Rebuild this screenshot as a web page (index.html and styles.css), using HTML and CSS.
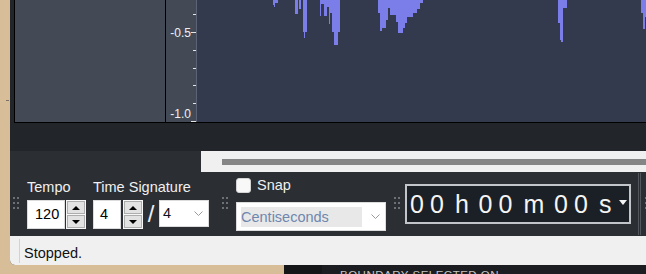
FILE: index.html
```html
<!DOCTYPE html>
<html lang="en">
<head>
    <meta charset="UTF-8">
    <meta name="viewport" content="width=device-width, initial-scale=1.0">
    <title>Audacity - Time Toolbars</title>
    <link rel="stylesheet" href="styles.css">
</head>
<body>
    <div class="screen">
        <div class="desktop-edge"><div class="edge-tick"></div></div>

        <div class="window">
            <!-- track area (bottom half of the waveform) -->
            <div class="tracks">
                <div class="track">
                    <div class="track-controls"></div>
                    <div class="ruler">
                        <svg class="ruler-ticks" width="30" height="122" viewBox="0 0 30 122">
                            <rect x="27" y="14" width="3" height="1"/>
                            <rect x="25" y="32" width="5" height="1"/>
                            <rect x="27" y="50" width="3" height="1"/>
                            <rect x="27" y="68" width="3" height="1"/>
                            <rect x="27" y="85" width="3" height="1"/>
                            <rect x="27" y="103" width="3" height="1"/>
                            <rect x="25" y="121" width="5" height="1"/>
                        </svg>
                        <span class="ruler-label label-mid">-0.5</span>
                        <span class="ruler-label label-low">-1.0</span>
                    </div>
                    <div class="wave">
                        <svg width="449" height="122" viewBox="0 0 449 122" shape-rendering="crispEdges">
                            <path class="wave-fill" d="M0,0 L76,0 L76,5 L77,5 L77,7 L78,7 L78,3 L81,3 L81,0
                                L98,0 L98,14 L101,14 L101,0 L102,0 L102,9 L104,9 L104,0 L106,0 L106,32 L107,32 L107,38 L108,38 L108,32 L110,32 L110,0
                                L123,0 L123,16 L124,16 L124,4 L127,4 L127,16 L130,16 L130,7 L132,7 L132,24 L133,24 L133,13 L135,13 L135,32 L137,32 L137,45 L141,45 L141,32 L143,32 L143,0
                                L181,0 L181,13 L183,13 L183,31 L185,31 L185,28 L189,28 L189,20 L191,20 L191,8 L193,8 L193,15 L199,15 L199,22 L201,22 L201,33 L206,33 L206,28 L208,28 L208,23 L210,23 L210,17 L216,17 L216,13 L220,13 L220,9 L223,9 L223,3 L226,3 L226,0
                                L361,0 L361,23 L363,23 L363,40 L364,40 L364,42 L366,42 L366,8 L370,8 L370,0
                                L444,0 L444,13 L446,13 L446,29 L448,29 L448,17 L449,17 L449,0 Z"/>
                        </svg>
                    </div>
                </div>
            </div>

            <div class="h-scroll-row">
                <div class="h-scroll"><div class="h-thumb"></div></div>
            </div>

            <!-- toolbars -->
            <div class="toolbars">
                <svg class="grip grip-first" width="7" height="12" viewBox="0 0 7 12">
                    <rect x="0" y="0" width="2" height="2"/><rect x="4" y="0" width="2" height="2"/>
                    <rect x="0" y="5" width="2" height="2"/><rect x="4" y="5" width="2" height="2"/>
                    <rect x="0" y="10" width="2" height="2"/><rect x="4" y="10" width="2" height="2"/>
                </svg>

                <div class="tool-group tempo-group">
                    <div class="tool-label">Tempo</div>
                    <div class="input-row">
                        <div class="num-box tempo-box">120</div>
                        <div class="spinner">
                            <div class="spin-btn spin-up"></div>
                            <div class="spin-btn spin-down"></div>
                        </div>
                    </div>
                </div>

                <div class="tool-group sig-group">
                    <div class="tool-label">Time Signature</div>
                    <div class="input-row">
                        <div class="num-box sig-box">4</div>
                        <div class="spinner spinner-sig">
                            <div class="spin-btn spin-up"></div>
                            <div class="spin-btn spin-down"></div>
                        </div>
                        <div class="sig-slash">/</div>
                        <div class="sig-select">
                            <span class="sig-value">4</span>
                            <svg class="chevron" width="9" height="5" viewBox="0 0 9 5">
                                <polyline points="0.5,0.5 4.5,4.5 8.5,0.5"/>
                            </svg>
                        </div>
                    </div>
                </div>

                <svg class="grip grip-snap" width="7" height="12" viewBox="0 0 7 12">
                    <rect x="0" y="0" width="2" height="2"/><rect x="4" y="0" width="2" height="2"/>
                    <rect x="0" y="5" width="2" height="2"/><rect x="4" y="5" width="2" height="2"/>
                    <rect x="0" y="10" width="2" height="2"/><rect x="4" y="10" width="2" height="2"/>
                </svg>

                <div class="tool-group snap-group">
                    <div class="snap-row">
                        <span class="checkbox"></span>
                        <span class="snap-label">Snap</span>
                    </div>
                    <div class="snap-select">
                        <span class="snap-value">Centiseconds</span>
                        <svg class="chevron snap-chevron" width="9" height="5" viewBox="0 0 9 5">
                            <polyline points="0.5,0.5 4.5,4.5 8.5,0.5"/>
                        </svg>
                    </div>
                </div>

                <svg class="grip grip-time" width="7" height="12" viewBox="0 0 7 12">
                    <rect x="0" y="0" width="2" height="2"/><rect x="4" y="0" width="2" height="2"/>
                    <rect x="0" y="5" width="2" height="2"/><rect x="4" y="5" width="2" height="2"/>
                    <rect x="0" y="10" width="2" height="2"/><rect x="4" y="10" width="2" height="2"/>
                </svg>

                <div class="time-display">
                    <span class="tt tt-a">0</span><span class="tt tt-b">0</span><span class="tt tt-h">h</span><span class="tt tt-a">0</span><span class="tt tt-b">0</span><span class="tt tt-m">m</span><span class="tt tt-a">0</span><span class="tt tt-b">0</span><span class="tt tt-s">s</span><span class="tt-menu"></span>
                </div>

                <div class="tool-sep"></div>

                <svg class="grip grip-last" width="7" height="12" viewBox="0 0 7 12">
                    <rect x="0" y="0" width="2" height="2"/><rect x="4" y="0" width="2" height="2"/>
                    <rect x="0" y="5" width="2" height="2"/><rect x="4" y="5" width="2" height="2"/>
                    <rect x="0" y="10" width="2" height="2"/><rect x="4" y="10" width="2" height="2"/>
                </svg>
            </div>

            <div class="status-bar">
                <div class="status-divider"></div>
                <div class="status-text">Stopped.</div>
            </div>
        </div>
    </div>

    <!-- window behind -->
    <div class="behind">
        <div class="behind-gap"></div>
        <div class="behind-dark"></div>
        <div class="behind-panel">BOUNDARY SELECTED ON</div>
    </div>
</body>
</html>
```

FILE: styles.css
```css
* {
    box-sizing: border-box;
}

body {
    margin: 0;
    width: 646px;
    height: 274px;
    overflow: hidden;
    background-color: #d7bd98;
    font-family: "Liberation Sans", Arial, sans-serif;
    font-size: 14.5px;
}

.screen {
    display: flex;
    height: 265px;
}

.desktop-edge {
    width: 10px;
    flex: none;
}

.edge-tick {
    width: 3px;
    height: 1px;
    margin: 100px 0 0 6px;
    background-color: #7b7266;
}

.window {
    width: 636px;
    flex: none;
    display: flex;
    flex-direction: column;
    background-color: #222529;
    border-bottom-left-radius: 5px;
    overflow: hidden;
}

/* tracks */
.tracks {
    height: 123px;
    padding-left: 4px;
    flex: none;
}

.track {
    display: flex;
    height: 123px;
    border-left: 1px solid #000;
    border-bottom: 1px solid #000;
}

.track-controls {
    width: 151px;
    flex: none;
    background-color: #434a56;
    border-right: 1px solid #000;
}

.ruler {
    position: relative;
    width: 31px;
    flex: none;
    background-color: #434a56;
    border-right: 1px solid #5c6374;
}

.ruler-ticks {
    display: block;
    fill: #e4e4e4;
}

.ruler-label {
    position: absolute;
    right: 5px;
    font-size: 12px;
    line-height: 12px;
    color: #eef0f4;
}

.label-mid {
    top: 27px;
}

.label-low {
    top: 108px;
}

.wave {
    flex: 1;
    background-color: #343a4e;
}

.wave svg {
    display: block;
}

.wave-fill {
    fill: #7b7ee8;
}

/* horizontal scrollbar */
.h-scroll-row {
    height: 49px;
    flex: none;
    padding-top: 28px;
    background: linear-gradient(#222529 0, #222529 28px, #2b2e33 28px);
}

.h-scroll {
    height: 21px;
    margin-left: 191px;
    padding-top: 8px;
    background-color: #f0f0f0;
}

.h-thumb {
    height: 6px;
    margin-left: 21px;
    background-color: #858585;
}

/* toolbars */
.toolbars {
    display: flex;
    align-items: flex-start;
    height: 64px;
    flex: none;
    background-color: #2b2e33;
    color: #f0f0f0;
}

.grip {
    flex: none;
    margin-top: 25px;
    fill: #6c7177;
}

.grip-first {
    margin-left: 3px;
}

.grip-snap {
    margin-left: 13px;
}

.grip-time {
    margin-left: 8px;
}

.grip-last {
    margin-left: 4px;
}

.tool-group {
    flex: none;
}

.tempo-group,
.sig-group {
    margin-left: 7px;
    padding-top: 7px;
}

.tool-label {
    line-height: 17px;
    margin-bottom: 4px;
    white-space: nowrap;
}

.input-row {
    display: flex;
    align-items: flex-start;
}

.num-box {
    height: 29px;
    background-color: #fff;
    border: 1px solid #dcdcdc;
    color: #000;
    line-height: 27px;
}

.tempo-box {
    width: 38px;
    padding-left: 7px;
}

.sig-box {
    width: 28px;
    padding-left: 6px;
}

.spinner {
    display: flex;
    flex-direction: column;
    gap: 1px;
    width: 20px;
    height: 29px;
    margin-left: 1px;
    padding: 1px;
    background-color: #f7f7f7;
}

.spinner-sig {
    margin-left: 2px;
}

.spin-btn {
    flex: 1;
    display: flex;
    align-items: center;
    justify-content: center;
    background-color: #e2e2e2;
    border: 1px solid #adadad;
}

.spin-btn::after {
    content: "";
    width: 0;
    height: 0;
    border-left: 4px solid transparent;
    border-right: 4px solid transparent;
}

.spin-up::after {
    border-bottom: 4px solid #000;
}

.spin-down::after {
    border-top: 4px solid #000;
}

.sig-slash {
    width: 16px;
    text-align: center;
    font-size: 24px;
    line-height: 27px;
    color: #eceef2;
}

.sig-select {
    display: flex;
    align-items: center;
    width: 50px;
    height: 27px;
    padding-left: 3px;
    background-color: #fff;
    border: 1px solid #dcdcdc;
    color: #101020;
}

.sig-value {
    width: 31px;
    line-height: 25px;
}

.chevron {
    display: block;
    fill: none;
    stroke: #9a9a9a;
    stroke-width: 1;
}

.snap-group {
    margin-left: 7px;
    padding-top: 6px;
}

.snap-row {
    display: flex;
    align-items: center;
    height: 15px;
}

.checkbox {
    width: 15px;
    height: 15px;
    background-color: #f8f8f8;
    border: 1px solid #d4d4d4;
    border-radius: 3px;
}

.snap-label {
    margin-left: 6px;
    line-height: 15px;
}

.snap-select {
    display: flex;
    align-items: center;
    width: 150px;
    height: 29px;
    margin-top: 9px;
    padding: 4px;
    background-color: #fff;
    border: 1px solid #dcdcdc;
}

.snap-value {
    width: 121px;
    height: 20px;
    line-height: 20px;
    background-color: #e8e8e8;
    color: #6f86ae;
    white-space: nowrap;
}

.snap-chevron {
    margin-left: 9px;
}

.time-display {
    display: flex;
    align-items: center;
    width: 226px;
    height: 40px;
    margin-top: 12px;
    margin-left: 4px;
    padding-left: 3px;
    background-color: #1b1f26;
    border: 2px solid #c2c5c9;
    color: #f4f4f4;
    font-size: 25px;
    flex: none;
}

.tt {
    display: inline-block;
}

.tt-a {
    width: 20px;
}

.tt-b {
    width: 25px;
}

.tt-h {
    width: 23.5px;
}

.tt-m {
    width: 30.5px;
}

.tt-s {
    width: 20px;
}

.tt-menu {
    width: 0;
    height: 0;
    margin-top: -3px;
    border-left: 4.5px solid transparent;
    border-right: 4.5px solid transparent;
    border-top: 5px solid #f4f4f4;
}

.tool-sep {
    width: 3px;
    height: 62px;
    margin-top: 1px;
    margin-left: 7px;
    flex: none;
    border-left: 1px solid #53575d;
    border-right: 1px solid #53575d;
}

/* status bar */
.status-bar {
    display: flex;
    height: 29px;
    flex: none;
    padding: 3px 0 2px 9px;
    background-color: #f0f0f0;
    color: #111;
    overflow: hidden;
}

.status-divider {
    width: 1px;
    background-color: #d2d2d2;
}

.status-text {
    margin-left: 4px;
    padding-top: 3px;
    line-height: 23px;
}

/* window peeking out below */
.behind {
    display: flex;
    height: 9px;
}

.behind-gap {
    width: 284px;
}

.behind-dark {
    width: 38px;
    background-color: #151618;
}

.behind-panel {
    flex: 1;
    padding: 4px 0 0 18px;
    background-color: #1c1d20;
    color: #c4c4c4;
    font-size: 11.5px;
    line-height: 12px;
    letter-spacing: 0.5px;
    white-space: nowrap;
    overflow: hidden;
}
```
